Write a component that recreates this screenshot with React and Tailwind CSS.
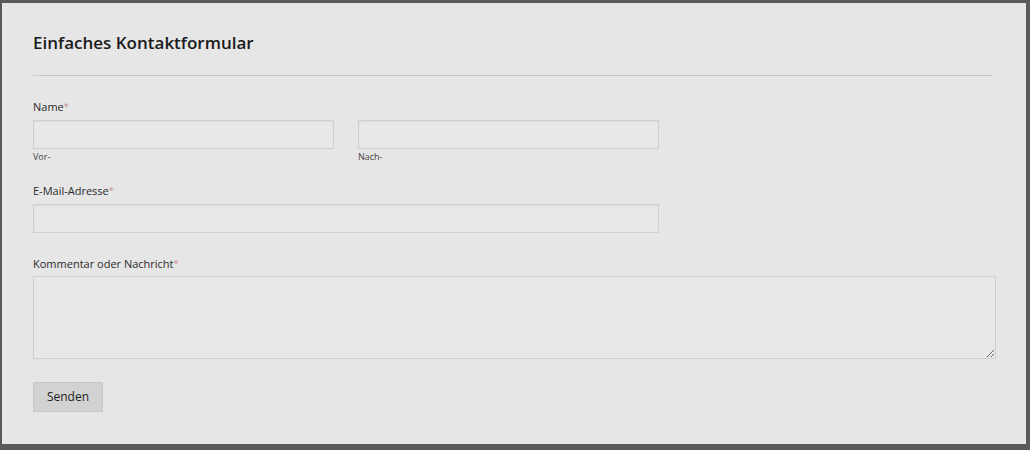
const inputCls =
  "block h-[29px] w-full border border-[#cfcfcf] bg-[#e8e8e8] shadow-[inset_0_1px_2px_rgba(0,0,0,0.06)]";

const Label = ({ children }) => (
  <label className="block text-[11px] leading-[14px] text-[#2a2a2a]">
    {children}
    <span className="text-[#c98a8a] text-[9px] align-top">*</span>
  </label>
);

export default function App() {
  return (
    <div
      className="h-[450px] w-[1030px] border-t-[3px] border-l-[2px] border-r-[4px] border-b-[6px] border-[#5a5a5a] bg-[#e6e6e6]"
      style={{ fontFamily: '"Open Sans", "Noto Sans", sans-serif' }}
    >
      <div className="px-[31px] pt-[28px]">
        <h2 className="text-[17px] leading-[24px] font-semibold text-[#1a1a1a]">
          Einfaches Kontaktformular
        </h2>
        <div className="mt-[20px] mr-[2px] h-px bg-[#c9c9c9]" />

        <div className="mt-[24px]">
          <Label>Name</Label>
          <div className="mt-[6px] flex gap-[24px] w-[626px]">
            <div className="w-[301px]">
              <input className={inputCls} />
              <div className="mt-[2px] text-[9px] leading-[12px] text-[#444]">Vor-</div>
            </div>
            <div className="w-[301px]">
              <input className={inputCls} />
              <div className="mt-[2px] text-[9px] leading-[12px] text-[#444]">Nach-</div>
            </div>
          </div>
        </div>

        <div className="mt-[21px]">
          <Label>E-Mail-Adresse</Label>
          <input className={inputCls + " mt-[6px] !w-[626px]"} />
        </div>

        <div className="mt-[24px]">
          <Label>Kommentar oder Nachricht</Label>
          <textarea className="mt-[5px] block h-[83px] w-[963px] border border-[#cfcfcf] bg-[#e8e8e8] resize-y" />
        </div>

        <button className="mt-[23px] h-[30px] w-[70px] bg-[#d2d2d2] border border-[#c8c8c8] text-[12px] text-[#222]">
          Senden
        </button>
      </div>
    </div>
  );
}
